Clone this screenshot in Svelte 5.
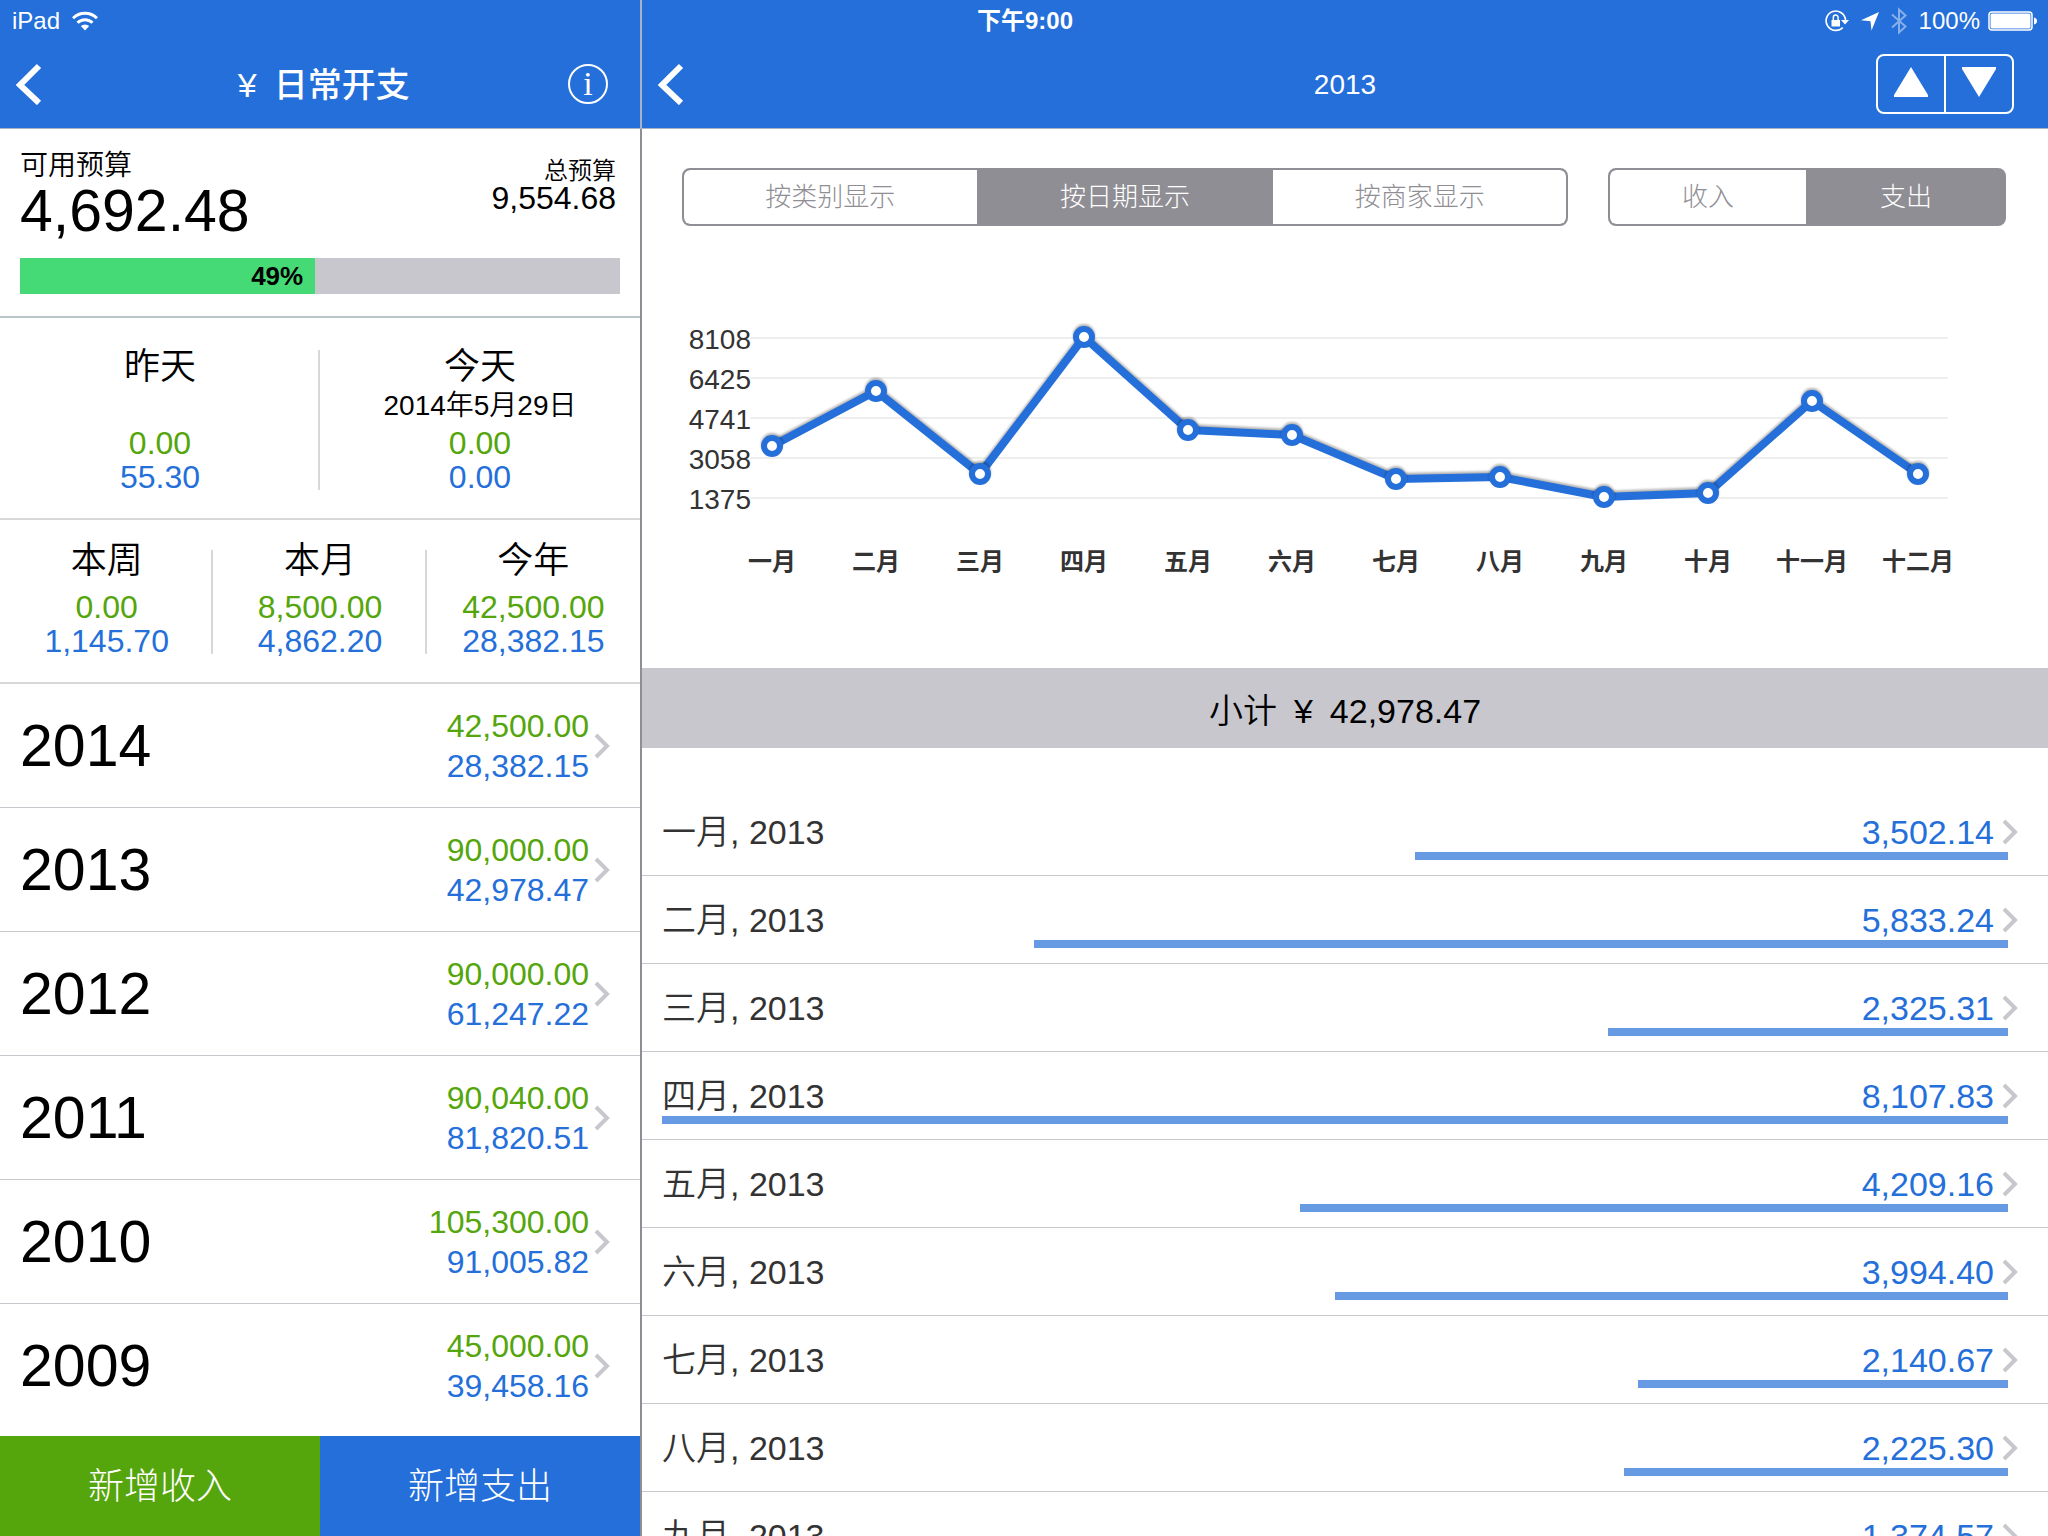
<script lang="ts">
	// Types/constants
	type Period = {
		title: string
		date?: string
		income: string
		expense: string
	}

	const days: Period[] = [
		{ title: '昨天', income: '0.00', expense: '55.30' },
		{ title: '今天', date: '2014年5月29日', income: '0.00', expense: '0.00' },
	]

	const periods: Period[] = [
		{ title: '本周', income: '0.00', expense: '1,145.70' },
		{ title: '本月', income: '8,500.00', expense: '4,862.20' },
		{ title: '今年', income: '42,500.00', expense: '28,382.15' },
	]

	const years = [
		{ year: 2014, income: '42,500.00', expense: '28,382.15' },
		{ year: 2013, income: '90,000.00', expense: '42,978.47' },
		{ year: 2012, income: '90,000.00', expense: '61,247.22' },
		{ year: 2011, income: '90,040.00', expense: '81,820.51' },
		{ year: 2010, income: '105,300.00', expense: '91,005.82' },
		{ year: 2009, income: '45,000.00', expense: '39,458.16' },
	]

	const months = [
		{ name: '一月', amount: 3502.14 },
		{ name: '二月', amount: 5833.24 },
		{ name: '三月', amount: 2325.31 },
		{ name: '四月', amount: 8107.83 },
		{ name: '五月', amount: 4209.16 },
		{ name: '六月', amount: 3994.40 },
		{ name: '七月', amount: 2140.67 },
		{ name: '八月', amount: 2225.30 },
		{ name: '九月', amount: 1374.57 },
	]

	const chartLabels = ['一月', '二月', '三月', '四月', '五月', '六月', '七月', '八月', '九月', '十月', '十一月', '十二月']
	const chartValues = [...months.map(month => month.amount), 1540, 5420, 2346]
	const ticks = [8108, 6425, 4741, 3058, 1375]

	const views = ['按类别显示', '按日期显示', '按商家显示']
	const kinds = ['收入', '支出']


	// State
	let view = $state('按日期显示')
	let kind = $state('支出')

	// (Derived)
	const max = Math.max(...months.map(month => month.amount))
	const points = chartValues.map((value, i) => ({
		x: i === 11 ? 1276 : 130 + i * 104,
		y: Math.round(271 - (value - 1375) * 160 / 6733),
		label: chartLabels[i],
	}))
	const line = points.map(point => `${point.x},${point.y}`).join(' ')

	const format = (value: number) => (
		value.toLocaleString('en-US', { minimumFractionDigits: 2 })
	)
</script>


{#snippet backIcon()}
	<svg width="28" height="42" viewBox="0 0 28 42" aria-hidden="true">
		<path d="M24 3 5 22l19 18" fill="none" stroke="currentColor" stroke-width="6" />
	</svg>
{/snippet}

{#snippet chevron()}
	<svg class="chevron" width="16" height="26" viewBox="0 0 16 26" aria-hidden="true">
		<path d="m2 2 11 11L2 24" fill="none" stroke="currentColor" stroke-width="4" />
	</svg>
{/snippet}

{#snippet periodRow(items: Period[], name: string)}
	<section class="periods {name}">
		{#each items as item}
			<div class="period">
				<div class="period-body">
					<h2>{item.title}</h2>
					{#if name === 'days'}
						<p class="date">{item.date ?? ''}</p>
					{/if}
					<p class="income">{item.income}</p>
					<p class="expense">{item.expense}</p>
				</div>
			</div>
		{/each}
	</section>
{/snippet}


<div class="app">
	<div class="status">
		<div class="status-side">
			<span>iPad</span>
			<svg width="26" height="20" viewBox="0 0 26 20" fill="none" stroke="currentColor" stroke-width="3" aria-hidden="true">
				<path d="M1 7.300a17 17 0 0 1 24 0M5.500 11.800a10.600 10.600 0 0 1 15 0" />
				<path d="m13 19.500-4.200-4.400a6 6 0 0 1 8.400 0z" fill="currentColor" stroke="none" />
			</svg>
		</div>
		<strong>下午9:00</strong>
		<div class="status-side end">
			<svg width="24" height="22" viewBox="0 0 24 22" fill="none" stroke="currentColor" aria-hidden="true">
				<path d="M17.800 17.500A9.700 9.700 0 1 1 20.500 10" stroke-width="1.700" />
				<path d="M16 10h8l-4 4.500z" fill="currentColor" stroke="none" />
				<path d="M6.500 10h8.500v6.500H6.500z" fill="currentColor" stroke="none" />
				<path d="M8.300 10V7.500a2.400 2.400 0 0 1 4.800 0V10" stroke-width="1.500" />
			</svg>
			<svg class="location" width="18" height="19" viewBox="0 0 18 19" aria-hidden="true">
				<path d="M18 0 10.500 18.500 9.500 9.300 0 8.300z" fill="currentColor" />
			</svg>
			<svg class="bluetooth" width="16" height="28" viewBox="0 0 16 28" aria-hidden="true">
				<path d="m1 7.500 13.500 12L8 25.500v-23l6.500 6L1 20.500" fill="none" stroke="currentColor" stroke-width="2" />
			</svg>
			<span>100%</span>
			<svg width="50" height="20" viewBox="0 0 50 20" aria-hidden="true">
				<rect x="1" y="1" width="43" height="18" rx="3" fill="none" stroke="currentColor" stroke-width="1.500" />
				<rect x="2.500" y="2.500" width="40" height="15" rx="1.500" fill="currentColor" />
				<path d="M46 6.500c4 .5 4 6.500 0 7z" fill="currentColor" />
			</svg>
		</div>
	</div>

	<aside>
		<header>
			<button class="back" type="button" aria-label="返回">{@render backIcon()}</button>
			<h1><span class="yen">¥</span> 日常开支</h1>
			<button class="info" type="button">i</button>
		</header>

		<section class="budget">
			<div class="budget-figures">
				<div>
					<p class="available-label">可用预算</p>
					<p class="available">4,692.48</p>
				</div>
				<div class="total">
					<p class="total-label">总预算</p>
					<p>9,554.68</p>
				</div>
			</div>
			<div class="meter">
				<div class="meter-fill" style:width="49.2%">49%</div>
			</div>
		</section>

		{@render periodRow(days, 'days')}
		{@render periodRow(periods, 'spans')}

		<nav class="years">
			{#each years as item}
				<a href="#{item.year}">
					<span class="year">{item.year}</span>
					<span class="amounts">
						<span class="income">{item.income}</span>
						<span class="expense">{item.expense}</span>
					</span>
					{@render chevron()}
				</a>
			{/each}
		</nav>

		<footer>
			<button class="add-income" type="button">新增收入</button>
			<button class="add-expense" type="button">新增支出</button>
		</footer>
	</aside>

	<main>
		<header>
			<button class="back" type="button" aria-label="返回">{@render backIcon()}</button>
			<h1 class="year-title">2013</h1>
			<div class="stepper">
				<button type="button" aria-label="上一年">
					<svg width="34" height="30" viewBox="0 0 34 30"><path d="M17 0l17 28v2H0v-2z" fill="currentColor" /></svg>
				</button>
				<button type="button" aria-label="下一年">
					<svg width="34" height="30" viewBox="0 0 34 30"><path d="M17 30 34 2V0H0v2z" fill="currentColor" /></svg>
				</button>
			</div>
		</header>

		<div class="content">
			<div class="controls">
				<div class="segments">
					{#each views as item}
						<button
							type="button"
							aria-pressed={view === item}
							onclick={() => view = item}
						>{item}</button>
					{/each}
				</div>
				<div class="segments">
					{#each kinds as item}
						<button
							type="button"
							aria-pressed={kind === item}
							onclick={() => kind = item}
						>{item}</button>
					{/each}
				</div>
			</div>

			<svg class="chart" viewBox="0 0 1406 442" role="img" aria-label="2013">
				{#each ticks as tick, i}
					<line x1="108" x2="1306" y1={112 + i * 40} y2={112 + i * 40} stroke="#eeeeee" stroke-width="2" />
					<text class="tick" x="109" y={123 + i * 40}>{tick}</text>
				{/each}
				<g class="series">
					<polyline points={line} fill="none" stroke="#246fd9" stroke-width="8" stroke-linejoin="round" />
				</g>
				{#each points as point}
					<circle class="series" cx={point.x} cy={point.y} r="8" fill="#ffffff" stroke="#246fd9" stroke-width="6" />
					<text class="month-label" x={point.x} y="344">{point.label}</text>
				{/each}
			</svg>

			<div class="subtotal">小计 <span class="yen">¥</span> 42,978.47</div>

			<div class="months">
				{#each months as month}
					<a href="#{month.name}">
						<span class="month-line">
							<span class="month-name">{month.name}, 2013</span>
							<span class="expense">{format(month.amount)}</span>
							{@render chevron()}
						</span>
						<span class="track">
							<span class="bar" style:width="calc(20px + (100% - 20px) * {month.amount / max})"></span>
						</span>
					</a>
				{/each}
			</div>
		</div>
	</main>
</div>


<style>
	:global(body) {
		margin: 0;
	}

	.app {
		--blue: #246fd9;
		--green: #55a50c;
		--gray: #8f8e94;
		--silver: #c8c7cd;

		position: relative;
		display: grid;
		grid-template-columns: 640px 1fr;
		height: 100vh;
		overflow: hidden;

		background: #ffffff;
		color: #000000;
		font-family: "Liberation Sans", "Noto Sans CJK SC", sans-serif;
		font-weight: 350;
		font-size: 32px;
	}

	h1, h2, p {
		margin: 0;
		font-weight: inherit;
	}

	button {
		padding: 0;
		border: 0;
		background: none;
		color: inherit;
		font: inherit;
		cursor: pointer;
	}

	a {
		color: inherit;
		text-decoration: none;
	}

	svg {
		display: block;
		flex: none;
	}

	.income {
		color: var(--green);
	}

	.expense {
		color: var(--blue);
	}

	.yen {
		display: inline-block;
		width: 1em;
		text-align: center;
	}

	.chevron {
		color: var(--silver);
	}

	/* Status bar, over both headers */
	.status {
		position: absolute;
		inset: 0 0 auto 0;
		display: grid;
		grid-template-columns: 1fr auto 1fr;
		align-items: center;
		height: 42px;
		padding: 0 10px 0 12px;

		color: #ffffff;
		font-size: 24px;
		line-height: 42px;

		strong {
			font-weight: 700;
		}
	}

	.status-side {
		display: flex;
		align-items: center;
		gap: 12px;

		&.end {
			justify-content: end;
			gap: 8px;
		}
	}

	.location {
		margin: 0 4px;
	}

	.bluetooth {
		margin-right: 4px;
		opacity: 0.45;
	}

	/* Panes */
	aside,
	main {
		display: flex;
		flex-direction: column;
		min-width: 0;
		min-height: 0;
	}

	header {
		display: grid;
		grid-template-columns: 1fr auto 1fr;
		align-items: center;
		height: 88px;
		padding-top: 40px;
		flex: none;

		background: var(--blue);
		border-bottom: 1px solid #a9b1c4;
		color: #ffffff;
	}

	h1 {
		padding-top: 2px;
		font-size: 34px;
		font-weight: 500;
		line-height: 40px;

		&.year-title {
			font-size: 28px;
		}
	}

	.back {
		justify-self: start;
		margin-left: 15px;
	}

	.info {
		box-sizing: border-box;
		justify-self: end;
		width: 40px;
		height: 40px;
		margin-right: 32px;

		border: 2px solid #ffffff;
		border-radius: 50%;
		font-family: "Liberation Serif", serif;
		font-size: 34px;
		line-height: 34px;
	}

	.stepper {
		box-sizing: border-box;
		display: grid;
		grid-template-columns: 66px 1fr;
		justify-self: end;
		width: 138px;
		height: 60px;
		margin-right: 34px;

		border: 2px solid #ffffff;
		border-radius: 8px;

		button {
			display: flex;
			justify-content: center;
			padding-top: 11px;
		}

		button + button {
			border-left: 2px solid #ffffff;
		}
	}

	/* Budget */
	.budget {
		padding: 21px 20px 22px;
		border-bottom: 2px solid #b9c4c9;
	}

	.budget-figures {
		display: flex;
		justify-content: space-between;
		margin-bottom: 18px;
	}

	.available-label {
		font-size: 28px;
		line-height: 32px;
	}

	.available {
		font-size: 59px;
		line-height: 58px;
	}

	.total {
		padding: 9px 4px 0 0;
		line-height: 30px;
		text-align: right;
	}

	.total-label {
		font-size: 24px;
		line-height: 24px;
	}

	.meter {
		background: var(--silver);
	}

	.meter-fill {
		box-sizing: border-box;
		height: 36px;
		padding-right: 12px;

		background: #46da77;
		font-size: 26px;
		font-weight: 700;
		line-height: 36px;
		text-align: right;
	}

	/* Periods */
	.periods {
		display: grid;
		grid-auto-columns: 1fr;
		grid-auto-flow: column;
		border-bottom: 2px solid #d8d8da;
		line-height: 34px;
		text-align: center;

		h2 {
			font-size: 36px;
			line-height: 44px;
		}
	}

	.days {
		padding: 27px 0 24px;
	}

	.spans {
		padding: 19px 0 24px;

		h2 {
			margin-bottom: 7px;
		}
	}

	.period {
		display: flex;

		& + &::before {
			content: '';
			width: 2px;
			margin: 5px 0 4px -2px;
			background: #d8d8da;
		}

		.spans & + &::before {
			margin-top: 11px;
		}
	}

	.period-body {
		flex: 1;
	}

	.date {
		height: 34px;
		margin-bottom: 3px;
		font-size: 28px;
	}

	/* Years */
	.years {
		flex: 1;
		min-height: 0;
		overflow: hidden;

		a {
			box-sizing: border-box;
			display: flex;
			align-items: center;
			height: 124px;
			padding: 1px 30px 0 20px;
			border-bottom: 1px solid var(--silver);

			&:last-child {
				border-bottom-color: transparent;
			}
		}
	}

	.year {
		flex: 1;
		font-size: 59px;
	}

	.amounts {
		display: grid;
		margin-right: 5px;
		line-height: 40px;
		text-align: right;
	}

	footer {
		display: grid;
		grid-template-columns: 1fr 1fr;
		height: 100px;
		flex: none;

		color: #ffffff;
		font-size: 36px;
		font-weight: 300;

		button {
			padding-bottom: 6px;
		}
	}

	.add-income {
		background: var(--green);
	}

	.add-expense {
		background: var(--blue);
	}

	/* Detail */
	main header {
		border-left: 2px solid #a9b1c4;
	}

	.content {
		flex: 1;
		min-height: 0;
		overflow: hidden;
		border-left: 2px solid var(--gray);
	}

	.controls {
		display: grid;
		grid-template-columns: 886fr 398fr;
		gap: 40px;
		padding: 39px 42px 0 40px;
	}

	.segments {
		box-sizing: border-box;
		display: grid;
		grid-auto-columns: 1fr;
		grid-auto-flow: column;
		gap: 2px;
		height: 58px;
		overflow: hidden;

		background: var(--gray);
		border: 2px solid var(--gray);
		border-radius: 8px;
		color: var(--gray);
		font-size: 26px;
		font-weight: 300;

		button {
			padding-bottom: 6px;
			background: #ffffff;

			&:first-child {
				border-radius: 6px 0 0 6px;
			}

			&:last-child {
				border-radius: 0 6px 6px 0;
			}

			&[aria-pressed="true"] {
				background: var(--gray);
				color: #ffffff;
			}
		}
	}

	.chart {
		width: 100%;
		fill: #333333;
	}

	.series {
		filter: drop-shadow(0 -2px 1px rgba(0, 0, 0, 0.3));
	}

	.tick {
		font-size: 28px;
		text-anchor: end;
	}

	.month-label {
		font-size: 24px;
		font-weight: 700;
		text-anchor: middle;
	}

	.subtotal {
		padding-top: 6px;
		background: var(--silver);
		font-size: 34px;
		line-height: 74px;
		text-align: center;
	}

	.months {
		padding-top: 40px;
		font-size: 34px;
		line-height: 40px;

		a {
			display: block;
			padding: 24px 30px 15px 20px;
			border-bottom: 1px solid var(--silver);
		}
	}

	.month-line {
		display: flex;
		align-items: center;
		gap: 8px;
	}

	.month-name {
		flex: 1;
		color: #333333;
	}

	.track {
		display: flex;
		justify-content: end;
		margin-right: 10px;
	}

	.bar {
		height: 8px;
		background: #669ae3;
	}
</style>
